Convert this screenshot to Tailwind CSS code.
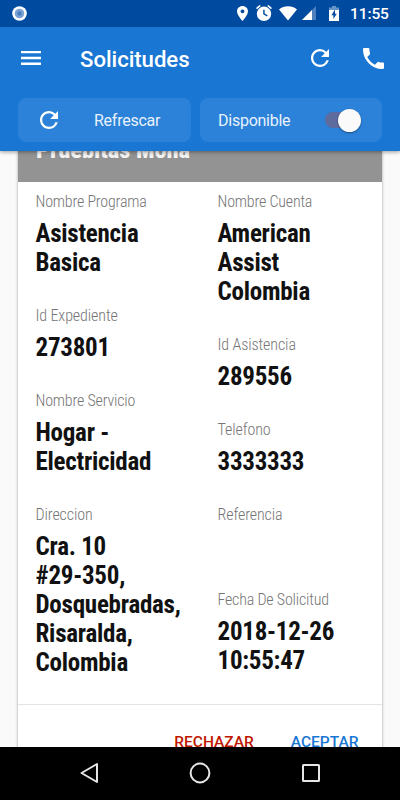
<!DOCTYPE html>
<html lang="es">
<head>
    <meta charset="UTF-8">
    <meta name="viewport" content="width=device-width, initial-scale=1.0">
    <title>Solicitudes</title>
    <script src="https://cdn.jsdelivr.net/npm/@tailwindcss/browser@4"></script>
</head>
<body class="h-[800px] overflow-hidden bg-[#fafafa] font-['Roboto',sans-serif]">
    <div class="flex h-[800px] w-[400px] flex-col overflow-hidden">
        <header class="relative z-10 h-[151px] shrink-0 bg-[#1976d3] text-white shadow-[0_1px_4px_rgba(0,0,0,0.4)]">
            <!-- Status bar -->
            <div class="flex h-[26.5px] items-center bg-[#004a9f] pl-3 pr-[11px]">
                <svg class="size-[15px]" viewBox="0 0 15 15">
                    <circle cx="7.5" cy="7.5" r="7.3" fill="#fff"/>
                    <circle cx="7.5" cy="7.5" r="4.8" fill="#7ca3d3"/>
                    <circle cx="7.5" cy="7.5" r="2.3" fill="#4a7fc0"/>
                </svg>
                <svg class="ml-auto h-[15px] w-[11px]" viewBox="5 2 14 20" preserveAspectRatio="none" fill="#fff">
                    <path d="M12 2C8.13 2 5 5.13 5 9c0 5.25 7 13 7 13s7-7.75 7-13c0-3.87-3.13-7-7-7zm0 9.5a2.5 2.5 0 0 1 0-5 2.5 2.5 0 0 1 0 5z"/>
                </svg>
                <svg class="ml-2 size-4" viewBox="2 2 20 20" fill="#fff">
                    <path d="M22 5.72l-4.6-3.86-1.29 1.53 4.6 3.86L22 5.72zM7.88 3.39L6.6 1.86 2 5.71l1.29 1.53 4.59-3.85zM12 4a9 9 0 1 0 0 18 9 9 0 0 0 0-18zm3.7 12.4L11 13.5V8h1.8v4.6l3.8 2.3z"/>
                </svg>
                <svg class="ml-[7px] h-[15px] w-[18px]" viewBox="0 0 18 15" fill="#fff">
                    <path d="M0 3.6C5 -.8 13 -.8 18 3.6L9 14.6z"/>
                </svg>
                <svg class="ml-[5px] h-[14px] w-[14px]" viewBox="0 0 14 14" fill="#fff">
                    <path d="M14 0v14H0z" opacity=".3"/>
                    <path d="M10 4v10H0z"/>
                </svg>
                <svg class="ml-[13px] h-[15px] w-[10px]" viewBox="0 0 10 15">
                    <path d="M3 0h4v1.5h3V5H0V1.5h3z" fill="#6693c8"/>
                    <path d="M0 4h10v11H0z" fill="#fff"/>
                    <path d="M6 3.5L2.4 9.3h2v3.6L7.8 7.7H6z" fill="#004a9f"/>
                </svg>
                <span class="ml-[11px] w-[39px] whitespace-nowrap pt-0.5 text-[15.5px] font-medium leading-none tracking-[-0.1px]">11:55</span>
            </div>

            <!-- Toolbar -->
            <div class="flex h-[63.5px] items-center pl-[21px] pr-4">
                <svg class="h-[14px] w-5" viewBox="0 0 20 14" fill="#fff">
                    <path d="M0 0h20v2.3H0zM0 5.8h20v2.4H0zM0 11.6h20V14H0z"/>
                </svg>
                <h1 class="ml-[39px] pt-px text-[22.2px] font-medium leading-none tracking-[-0.05px]">Solicitudes</h1>
                <svg class="ml-auto size-[18px]" viewBox="4 4 16 16" fill="#fff">
                    <path d="M17.65 6.35A7.958 7.958 0 0 0 12 4c-4.42 0-7.99 3.58-7.99 8s3.57 8 7.99 8c3.73 0 6.84-2.55 7.73-6h-2.08A5.99 5.99 0 0 1 12 18c-3.31 0-6-2.69-6-6s2.69-6 6-6c1.66 0 3.14.69 4.22 1.78L13 11h7V4l-2.35 2.35z"/>
                </svg>
                <svg class="ml-[34px] size-[21px]" viewBox="3 3 18 18" fill="#fff">
                    <path d="M6.62 10.79c1.44 2.83 3.76 5.14 6.59 6.59l2.2-2.2c.27-.27.67-.36 1.02-.24 1.12.37 2.33.57 3.57.57.55 0 1 .45 1 1V20c0 .55-.45 1-1 1-9.39 0-17-7.61-17-17 0-.55.45-1 1-1h3.5c.55 0 1 .45 1 1 0 1.25.2 2.45.57 3.57.11.35.03.74-.25 1.02l-2.2 2.2z"/>
                </svg>
            </div>

            <!-- Actions -->
            <div class="mt-2 flex gap-[9px] px-[18px]">
                <button class="flex h-11 w-[173px] items-center rounded-lg bg-[#2b82d8] pl-[22px]">
                    <svg class="size-[18px]" viewBox="4 4 16 16" fill="#fff">
                        <path d="M17.65 6.35A7.958 7.958 0 0 0 12 4c-4.42 0-7.99 3.58-7.99 8s3.57 8 7.99 8c3.73 0 6.84-2.55 7.73-6h-2.08A5.99 5.99 0 0 1 12 18c-3.31 0-6-2.69-6-6s2.69-6 6-6c1.66 0 3.14.69 4.22 1.78L13 11h7V4l-2.35 2.35z"/>
                    </svg>
                    <span class="ml-9 pt-0.5 text-[16px] tracking-[-0.25px] text-[#e8f1fb]">Refrescar</span>
                </button>
                <div class="flex h-11 w-[182px] items-center justify-between rounded-lg bg-[#2b82d8] pl-[18px] pr-[21px]">
                    <span class="pt-0.5 text-[16px] tracking-[-0.25px] text-[#e8f1fb]">Disponible</span>
                    <div class="flex h-4 w-9 items-center justify-end rounded-full bg-[#5e6b9f]">
                        <div class="size-[23px] shrink-0 rounded-full bg-[#fafafa] shadow-[0_1px_2px_rgba(0,0,0,0.4)]"></div>
                    </div>
                </div>
            </div>
        </header>

        <!-- Request card -->
        <main class="min-h-0 flex-1 overflow-hidden px-[18px]">
            <div class="h-[620px] w-[364px] bg-white shadow-[0_0_3px_rgba(0,0,0,0.35)]">
                <div class="flex h-[30.5px] items-start overflow-hidden bg-[#939393] pl-[18px]">
                    <h2 class="-mt-4 font-['Roboto_Condensed','Roboto',sans-serif] text-[24.5px] font-extrabold font-stretch-condensed leading-[29px] tracking-[-0.05px] text-[#f4f4f4]">Pruebitas Mona</h2>
                </div>
                <div class="flex h-[523px] border-b border-[#e3e3e3] pl-[17.5px] pt-[10.5px] font-['Roboto_Condensed','Roboto',sans-serif] font-stretch-condensed">
                    <dl class="w-[182px] text-[25px] font-bold leading-[28.9px] tracking-[-0.25px] text-[#111]">
                        <dt class="mb-[9px] text-[16px] font-light leading-[19.2px] tracking-[-0.2px] text-[#757575]">Nombre Programa</dt>
                        <dd class="mb-7">Asistencia<br>Basica</dd>
                        <dt class="mb-[9px] text-[16px] font-light leading-[19.2px] tracking-[-0.1px] text-[#757575]">Id Expediente</dt>
                        <dd class="mb-7">273801</dd>
                        <dt class="mb-[9px] text-[16px] font-light leading-[19.2px] tracking-[-0.2px] text-[#757575]">Nombre Servicio</dt>
                        <dd class="mb-7">Hogar -<br>Electricidad</dd>
                        <dt class="mb-[9px] text-[16px] font-light leading-[19.2px] tracking-[-0.1px] text-[#757575]">Direccion</dt>
                        <dd>Cra. 10<br>#29-350,<br>Dosquebradas,<br>Risaralda,<br>Colombia</dd>
                    </dl>
                    <dl class="text-[25px] font-bold leading-[28.9px] tracking-[-0.25px] text-[#111]">
                        <dt class="mb-[9px] text-[16px] font-light leading-[19.2px] tracking-[-0.2px] text-[#757575]">Nombre Cuenta</dt>
                        <dd class="mb-7">American<br>Assist<br>Colombia</dd>
                        <dt class="mb-[9px] text-[16px] font-light leading-[19.2px] tracking-[-0.1px] text-[#757575]">Id Asistencia</dt>
                        <dd class="mb-7">289556</dd>
                        <dt class="mb-[9px] text-[16px] font-light leading-[19.2px] tracking-[-0.1px] text-[#757575]">Telefono</dt>
                        <dd class="mb-7">3333333</dd>
                        <dt class="mb-[9px] text-[16px] font-light leading-[19.2px] tracking-[-0.1px] text-[#757575]">Referencia</dt>
                        <dd class="mb-7">&nbsp;</dd>
                        <dt class="mb-[9px] text-[16px] font-light leading-[19.2px] tracking-[-0.2px] text-[#757575]">Fecha De Solicitud</dt>
                        <dd>2018-12-26<br>10:55:47</dd>
                    </dl>
                </div>
                <div class="flex justify-end gap-[37px] pr-[23.5px] pt-[27px] text-[15.5px] font-medium leading-5">
                    <button class="text-[#bf1600]">RECHAZAR</button>
                    <button class="text-[#1976d3]">ACEPTAR</button>
                </div>
            </div>
        </main>

        <!-- Navigation bar -->
        <nav class="relative z-10 flex h-[53.5px] shrink-0 items-center bg-black pl-20">
            <svg class="h-[22px] w-[18px]" viewBox="0 0 18 22" fill="none" stroke="#e6e6e6" stroke-width="2">
                <path d="M17 2v18L1.5 11z" stroke-linejoin="round"/>
            </svg>
            <svg class="ml-[91px] size-[22px]" viewBox="0 0 22 22" fill="none" stroke="#e6e6e6" stroke-width="2">
                <circle cx="11" cy="11" r="9.4"/>
            </svg>
            <svg class="ml-[91px] size-[18px]" viewBox="0 0 18 18" fill="none" stroke="#e6e6e6" stroke-width="2">
                <rect x="1" y="1" width="16" height="16" rx="0.5"/>
            </svg>
        </nav>
    </div>
</body>
</html>
